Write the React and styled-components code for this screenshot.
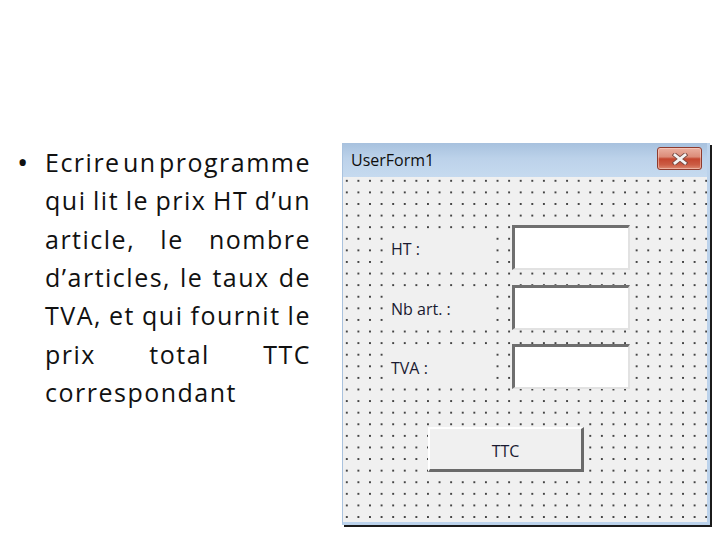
import React from 'react';
import styled, { createGlobalStyle } from 'styled-components';

const GlobalStyle = createGlobalStyle`
  html, body {
    margin: 0;
    padding: 0;
    background: #ffffff;
  }
`;

const Slide = styled.div`
  width: 720px;
  height: 540px;
  display: flex;
  align-items: flex-start;
  padding-top: 143px;
  box-sizing: border-box;
  overflow: hidden;
  background: #ffffff;
`;

const BulletBlock = styled.div`
  display: flex;
  align-items: flex-start;
  padding-left: 17px;
  width: 294px;
`;

const Bullet = styled.span`
  width: 28px;
  height: 38px;
  display: flex;
  align-items: center;
  font-family: "Open Sans", sans-serif;
  font-size: 30px;
  line-height: 1;
  color: #111;
`;

const Paragraph = styled.div`
  width: 266px;
  font-family: "Open Sans", sans-serif;
  font-size: 25px;
  letter-spacing: 1.5px;
  color: #111;
`;

const Line = styled.div`
  display: flex;
  justify-content: ${(p) => (p.$last ? 'flex-start' : 'space-between')};
  gap: ${(p) => (p.$last ? '7px' : '0')};
  height: 38.3px;
  align-items: center;
  white-space: nowrap;
`;

// form window
const Window = styled.div`
  margin-left: 31px;
  width: 368px;
  height: 382px;
  box-sizing: border-box;
  display: flex;
  flex-direction: column;
  border-left: 1px solid #a9c2de;
  border-right: 3px solid #bcd3ec;
  border-bottom: 3px solid #bcd3ec;
  box-shadow: 2px 2px 0 #1b1b1b;
`;

const TitleBar = styled.div`
  height: 34px;
  flex-shrink: 0;
  display: flex;
  align-items: flex-start;
  justify-content: space-between;
  padding: 0 5px 0 8px;
  background: linear-gradient(#a7c1de 0%, #bcd2ea 45%, #c6daef 100%);
`;

const Title = styled.span`
  font-family: "Open Sans", sans-serif;
  font-size: 16px;
  line-height: 34px;
  color: #0e0e0e;
`;

const CloseButton = styled.div`
  margin-top: 4px;
  width: 45px;
  height: 23px;
  box-sizing: border-box;
  border: 1px solid #8e3b2d;
  border-radius: 3px;
  display: flex;
  align-items: center;
  justify-content: center;
  background: linear-gradient(#eab0a1 0%, #dc8c79 42%, #c4462f 52%, #cc5d45 80%, #dd8b72 100%);
  box-shadow: inset 0 0 0 1px rgba(255, 220, 210, 0.5);
`;

const FormBody = styled.div`
  flex: 1;
  display: flex;
  flex-direction: column;
  align-items: flex-start;
  padding: 48px 0 0 42px;
  background-color: #f0f0f0;
  background-image: radial-gradient(circle, #222 0.6px, rgba(0, 0, 0, 0) 1.1px);
  background-size: 11.6px 11.6px;
  background-position: -2px -2px;
`;

const Fields = styled.div`
  display: flex;
  flex-direction: column;
  gap: 14.5px;
`;

const FieldRow = styled.div`
  display: flex;
  align-items: center;
  gap: 25px;
`;

const Label = styled.div`
  width: 102px;
  height: 34px;
  box-sizing: border-box;
  padding: 3px 0 0 6px;
  display: flex;
  align-items: center;
  background: #f0f0f0;
  font-family: "Open Sans", sans-serif;
  font-size: 16px;
  color: #1a1a30;
`;

const TextBox = styled.div`
  width: 118px;
  height: 45px;
  box-sizing: border-box;
  background: #ffffff;
  border-top: 3px solid #6f6f6f;
  border-left: 3px solid #6f6f6f;
  border-right: 2px solid #e2e2e2;
  border-bottom: 2px solid #e2e2e2;
`;

const CommandButton = styled.div`
  margin: 38px 0 0 43px;
  width: 156px;
  height: 45px;
  box-sizing: border-box;
  padding-top: 4px;
  display: flex;
  align-items: center;
  justify-content: center;
  background: #f0f0f0;
  border-top: 2px solid #ffffff;
  border-left: 2px solid #ffffff;
  border-right: 3px solid #6a6a6a;
  border-bottom: 3px solid #6a6a6a;
  font-family: "Open Sans", sans-serif;
  font-size: 16px;
  color: #1a1a30;
`;

const lines = [
  'Ecrire un programme',
  'qui lit le prix HT d’un',
  'article, le nombre',
  'd’articles, le taux de',
  'TVA, et qui fournit le',
  'prix total TTC',
  'correspondant',
];

const fields = ['HT :', 'Nb art. :', 'TVA :'];

const CloseIcon = () => (
  <svg width="16" height="12" viewBox="0 0 16 12">
    <path d="M3 2 L13 10 M13 2 L3 10" stroke="#7a4a42" strokeWidth="4.6" strokeLinecap="square" />
    <path d="M3 2 L13 10 M13 2 L3 10" stroke="#f4f4f4" strokeWidth="2.8" strokeLinecap="square" />
  </svg>
);

const App = () => {
  return (
    <Slide>
      <GlobalStyle />
      <BulletBlock>
        <Bullet>•</Bullet>
        <Paragraph>
          {lines.map((line, i) => (
            <Line key={i} $last={i === lines.length - 1}>
              {line.split(' ').map((word, j) => (
                <span key={j}>{word}</span>
              ))}
            </Line>
          ))}
        </Paragraph>
      </BulletBlock>

      <Window>
        <TitleBar>
          <Title>UserForm1</Title>
          <CloseButton>
            <CloseIcon />
          </CloseButton>
        </TitleBar>
        <FormBody>
          <Fields>
            {fields.map((f) => (
              <FieldRow key={f}>
                <Label>{f}</Label>
                <TextBox />
              </FieldRow>
            ))}
          </Fields>
          <CommandButton>TTC</CommandButton>
        </FormBody>
      </Window>
    </Slide>
  );
};

export default App;
